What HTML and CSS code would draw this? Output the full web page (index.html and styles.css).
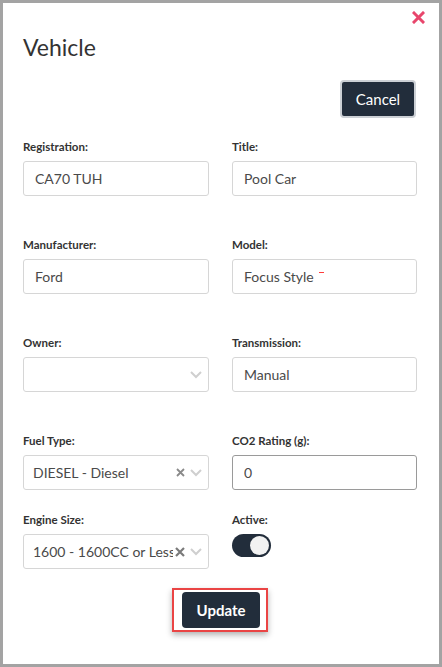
FILE: index.html
```html
<!DOCTYPE html>
<html lang="en">
<head>
<meta charset="utf-8">
<title>Vehicle</title>
<link rel="stylesheet" href="styles.css">
</head>
<body>
<div class="modal">
  <div class="close-row">
    <svg class="close" width="13" height="13" viewBox="0 0 13 13"><path d="M2 2L11 11M11 2L2 11" stroke="#e8466c" stroke-width="3" stroke-linecap="square"/></svg>
  </div>
  <h1 class="title">Vehicle</h1>
  <div class="actions">
    <button class="btn btn-cancel">Cancel</button>
  </div>

  <div class="row row-1">
    <div class="field">
      <label class="label">Registration:</label>
      <div class="input"><span class="value">CA70 TUH</span></div>
    </div>
    <div class="field">
      <label class="label">Title:</label>
      <div class="input"><span class="value">Pool Car</span></div>
    </div>
  </div>

  <div class="row row-2">
    <div class="field">
      <label class="label">Manufacturer:</label>
      <div class="input"><span class="value">Ford</span></div>
    </div>
    <div class="field">
      <label class="label">Model:</label>
      <div class="input"><span class="value">Focus Style</span><span class="redmark"></span></div>
    </div>
  </div>

  <div class="row row-3">
    <div class="field">
      <label class="label">Owner:</label>
      <div class="input select">
        <span class="value"></span>
        <svg class="chev" width="12" height="8" viewBox="0 0 12 8"><path d="M1 1L6 6L11 1" fill="none" stroke="#cfcfcf" stroke-width="2"/></svg>
      </div>
    </div>
    <div class="field">
      <label class="label">Transmission:</label>
      <div class="input"><span class="value">Manual</span></div>
    </div>
  </div>

  <div class="row row-4">
    <div class="field">
      <label class="label">Fuel Type:</label>
      <div class="input select">
        <span class="value sel">DIESEL - Diesel</span>
        <svg class="clear" width="9" height="9" viewBox="0 0 9 9"><path d="M1 1L8 8M8 1L1 8" stroke="#8a8a8a" stroke-width="1.8"/></svg>
        <svg class="chev" width="12" height="8" viewBox="0 0 12 8"><path d="M1 1L6 6L11 1" fill="none" stroke="#cfcfcf" stroke-width="2"/></svg>
      </div>
    </div>
    <div class="field">
      <label class="label">CO2 Rating (g):</label>
      <div class="input focused"><span class="value">0</span></div>
    </div>
  </div>

  <div class="row row-5">
    <div class="field">
      <label class="label">Engine Size:</label>
      <div class="input select">
        <span class="value sel">1600 - 1600CC or Less</span>
        <svg class="clear" width="10" height="10" viewBox="0 0 10 10"><path d="M1 1L9 9M9 1L1 9" stroke="#7a7a7a" stroke-width="2.2"/></svg>
        <svg class="chev" width="12" height="8" viewBox="0 0 12 8"><path d="M1 1L6 6L11 1" fill="none" stroke="#cfcfcf" stroke-width="2"/></svg>
      </div>
    </div>
    <div class="field">
      <label class="label">Active:</label>
      <div class="toggle"><span class="knob"></span></div>
    </div>
  </div>

  <div class="footer">
    <div class="highlight">
      <button class="btn btn-update">Update</button>
    </div>
  </div>
</div>
</body>
</html>
```

FILE: styles.css
```css
* { box-sizing: border-box; }
html, body { margin: 0; padding: 0; background: #ffffff; }
body {
  font-family: "Lato", "Open Sans", Arial, sans-serif;
  color: #333;
}
.modal {
  width: 442px;
  height: 667px;
  border: 3px solid #a3a3a3;
  background: #fff;
  padding: 0 22px 0 20px;
  display: flex;
  flex-direction: column;
}
.close-row {
  display: flex;
  justify-content: flex-end;
  padding-top: 8px;
  margin-right: -8px;
  height: 21px;
}
.close { display: block; }
.title {
  margin: 7px 0 0 0;
  font-size: 23px;
  font-weight: 400;
  line-height: 32px;
  color: #333;
}
.actions {
  display: flex;
  justify-content: flex-end;
  margin-top: 17px;
  padding-right: 1px;
}
.btn {
  font-family: inherit;
  background: #222d3b;
  color: #fff;
  border-radius: 4px;
  cursor: pointer;
}
.btn-cancel {
  width: 76px;
  height: 38px;
  font-size: 15px;
  border: 2px solid #ccd0d5;
  padding: 0;
}
.row {
  display: grid;
  grid-template-columns: 186px 185px;
  column-gap: 23px;
}
.row-1 { margin-top: 22px; }
.row-2 { margin-top: 42px; }
.row-3 { margin-top: 42px; }
.row-4 { margin-top: 42px; }
.row-5 { margin-top: 23px; }
.field { display: flex; flex-direction: column; }
.label {
  font-size: 11.5px;
  font-weight: 700;
  line-height: 14px;
  color: #333;
  margin-bottom: 7px;
}
.input {
  height: 35px;
  border: 1px solid #d6d6d6;
  border-radius: 3px;
  display: flex;
  align-items: center;
  padding: 0 11px;
  font-size: 14px;
  color: #4a4a4a;
  position: relative;
}
.input.focused { border-color: #9a9a9a; }
.value { white-space: nowrap; overflow: hidden; flex: 1; }
.select { padding: 0 6px 0 9px; }
.select .value.sel { flex: 1; overflow: hidden; }
.clear { flex: none; margin: 0 5px 0 2px; }
.chev { flex: none; margin-right: 0; }
.redmark {
  position: absolute;
  left: 86px;
  top: 12px;
  width: 5px;
  height: 1px;
  background: #ff3b3b;
}
.toggle {
  width: 39px;
  height: 23px;
  border-radius: 12px;
  background: #222d3b;
  position: relative;
}
.knob {
  position: absolute;
  right: 2px;
  top: 2px;
  width: 19px;
  height: 19px;
  border-radius: 50%;
  background: #f2f2f2;
}
.footer {
  display: flex;
  justify-content: center;
  margin-top: 19px;
}
.highlight {
  border: 2px solid #ea4444;
  padding: 2px 6px 2px 8px;
  box-shadow: 0 3px 6px rgba(0,0,0,0.3);
}
.btn-update {
  display: block;
  width: 78px;
  height: 36px;
  border: none;
  font-size: 15px;
  font-weight: 700;
  padding: 0;
}
```
